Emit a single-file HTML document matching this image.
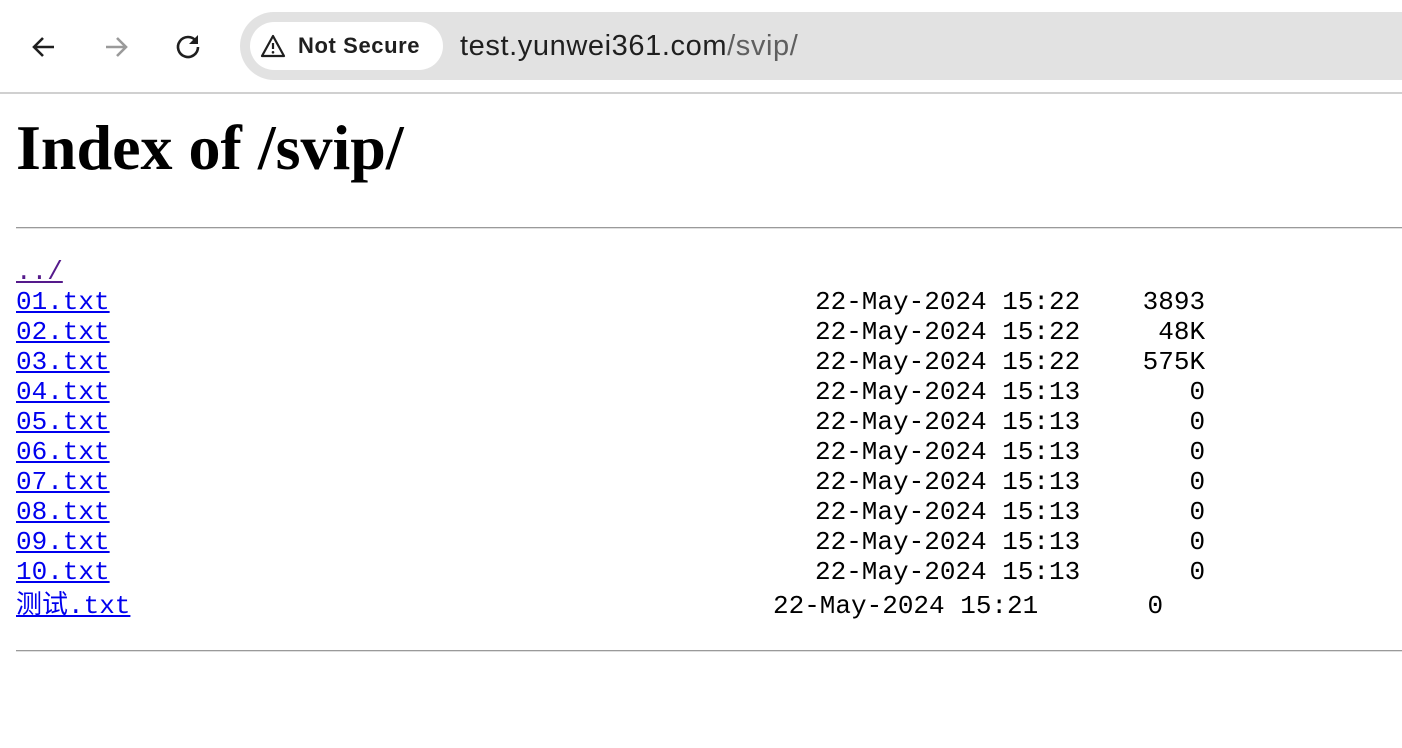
<!DOCTYPE html>
<html><head><meta charset="utf-8"><style>
body{margin:0;width:1402px;height:748px;overflow:hidden;background:#fff;position:relative;font-family:"Liberation Serif",serif}
.bar{position:absolute;left:0;top:0;width:1402px;height:92px;background:#fff;border-bottom:2px solid #d0d0d0}
.omni{position:absolute;left:240px;top:12px;width:1200px;height:68px;border-radius:34px;background:#e2e2e2}
.pill{position:absolute;left:250px;top:22px;width:193px;height:48px;border-radius:24px;background:#fff;font:bold 22px "Liberation Sans",sans-serif;letter-spacing:0.6px;color:#1f1f1f;line-height:48px}
.url{position:absolute;left:460px;top:24px;font:29px "Liberation Sans",sans-serif;letter-spacing:0.6px;color:#1f1f1f;line-height:44px}
h1{position:absolute;left:16px;top:108px;margin:0;font:bold 64px "Liberation Serif",serif;line-height:80px}
.hr{position:absolute;left:16px;width:1386px;height:0;border-top:1px solid #9a9a9a;border-bottom:1px solid #e0e0e0}
.r{position:absolute;font:26px "Liberation Mono","Noto Sans CJK SC",monospace;line-height:30px;white-space:pre;color:#000}
a{color:#0000ee}
a.v{color:#551a8b}
</style></head><body>
<div class="bar"></div>
<div class="omni"></div>
<div class="pill"><svg style="position:absolute;left:10px;top:12px" width="26" height="24" viewBox="0 0 26 24"><path d="M13 2 L24 22 H2 Z" fill="none" stroke="#1f1f1f" stroke-width="2.2" stroke-linejoin="round"/><path d="M13 9v6" stroke="#1f1f1f" stroke-width="2.2"/><circle cx="13" cy="18.3" r="1.3" fill="#1f1f1f"/></svg><span style="position:absolute;left:48px">Not Secure</span></div>
<div class="url">test.yunwei361.com<span style="color:#5f5f5f">/svip/</span></div>
<svg style="position:absolute;left:30px;top:33px" width="28" height="28" viewBox="0 0 28 28"><path d="M24 14H5M13 5L4 14l9 9" fill="none" stroke="#1f1f1f" stroke-width="2.6"/></svg>
<svg style="position:absolute;left:102px;top:33px" width="28" height="28" viewBox="0 0 28 28"><path d="M4 14h19M15 5l9 9-9 9" fill="none" stroke="#9a9a9a" stroke-width="2.6"/></svg>
<svg style="position:absolute;left:174px;top:32px" width="28" height="28" viewBox="0 0 28 28"><path d="M22 9A10 10 0 1 0 24 15" fill="none" stroke="#1f1f1f" stroke-width="2.6"/><path d="M24 3v9h-9z" fill="#1f1f1f"/></svg>
<h1>Index of /svip/</h1>
<div class="hr" style="top:227px"></div>
<div class="r" style="left:16px;top:257px"><a class="v" href="#">../</a></div>
<div class="r" style="left:16px;top:287px"><a href="#">01.txt</a></div>
<div class="r" style="left:16px;top:317px"><a href="#">02.txt</a></div>
<div class="r" style="left:16px;top:347px"><a href="#">03.txt</a></div>
<div class="r" style="left:16px;top:377px"><a href="#">04.txt</a></div>
<div class="r" style="left:16px;top:407px"><a href="#">05.txt</a></div>
<div class="r" style="left:16px;top:437px"><a href="#">06.txt</a></div>
<div class="r" style="left:16px;top:467px"><a href="#">07.txt</a></div>
<div class="r" style="left:16px;top:497px"><a href="#">08.txt</a></div>
<div class="r" style="left:16px;top:527px"><a href="#">09.txt</a></div>
<div class="r" style="left:16px;top:557px"><a href="#">10.txt</a></div>
<div class="r" style="left:16px;top:591px"><a href="#">测试.txt</a></div>
<div class="r" style="left:815px;top:287px">22-May-2024 15:22    3893
22-May-2024 15:22     48K
22-May-2024 15:22    575K
22-May-2024 15:13       0
22-May-2024 15:13       0
22-May-2024 15:13       0
22-May-2024 15:13       0
22-May-2024 15:13       0
22-May-2024 15:13       0
22-May-2024 15:13       0</div>
<div class="r" style="left:773px;top:591px">22-May-2024 15:21       0</div>
<div class="hr" style="top:650px"></div>
</body></html>
